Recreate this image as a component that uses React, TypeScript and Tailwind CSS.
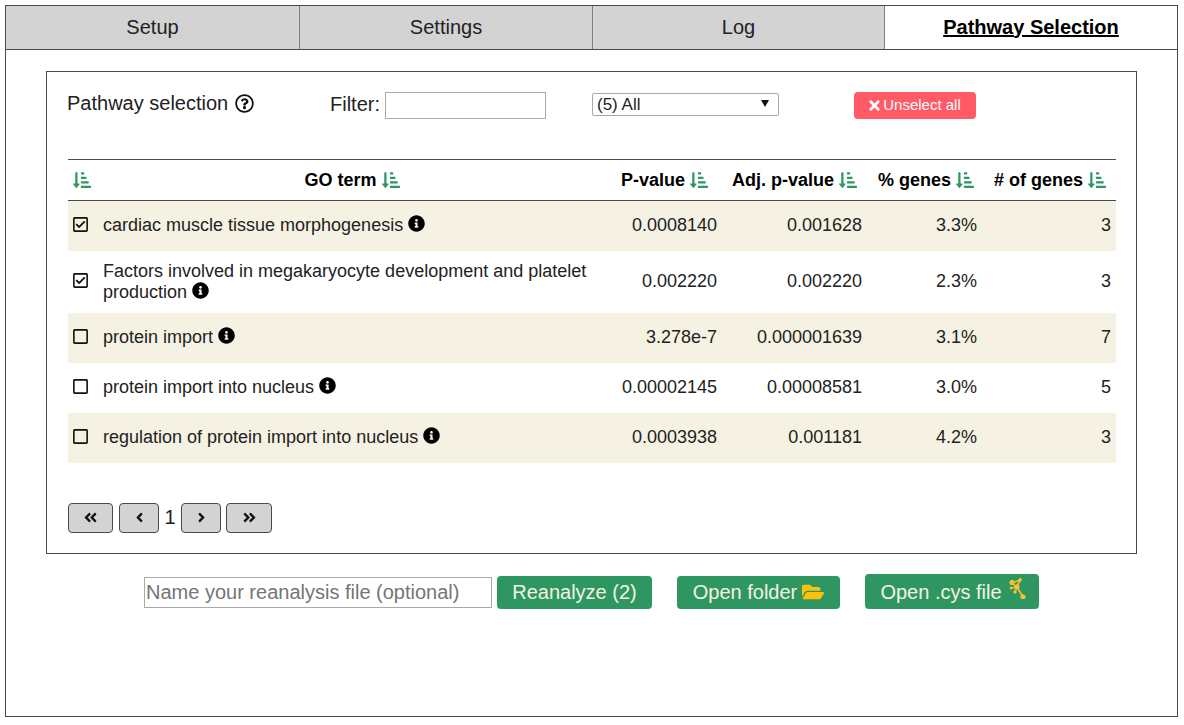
import React from 'react';
import {
  FaSortAmountDownAlt,
  FaInfoCircle,
  FaRegQuestionCircle,
  FaTimes,
  FaAngleDoubleLeft,
  FaAngleDoubleRight,
  FaAngleLeft,
  FaAngleRight,
  FaFolderOpen,
  FaRegCheckSquare,
  FaRegSquare,
} from 'react-icons/fa';

const tabs = ['Setup', 'Settings', 'Log', 'Pathway Selection'];

const rows = [
  { checked: true, term: 'cardiac muscle tissue morphogenesis', p: '0.0008140', adj: '0.001628', pct: '3.3%', n: 3, h: 'h-[50px]' },
  { checked: true, term: 'Factors involved in megakaryocyte development and platelet production', p: '0.002220', adj: '0.002220', pct: '2.3%', n: 3, h: 'h-[62px]' },
  { checked: false, term: 'protein import', p: '3.278e-7', adj: '0.000001639', pct: '3.1%', n: 7, h: 'h-[50px]' },
  { checked: false, term: 'protein import into nucleus', p: '0.00002145', adj: '0.00008581', pct: '3.0%', n: 5, h: 'h-[50px]' },
  { checked: false, term: 'regulation of protein import into nucleus', p: '0.0003938', adj: '0.001181', pct: '4.2%', n: 3, h: 'h-[50px]' },
];

const SortIcon: React.FC = () => (
  <FaSortAmountDownAlt className="inline-block text-[18px] text-[#2e9761] align-[-3px]" />
);

const CytoscapeIcon: React.FC = () => (
  <svg viewBox="0 0 20 22" className="w-[20px] h-[22px] -mt-[7px] ml-[6px]" fill="#fbc02d" stroke="#fbc02d">
    <path d="M12 3 L4 6 L9 10 Z M9 10 L15 20 M9 10 L7 15 M3 11 L9 10" strokeWidth="1.6" fill="none" />
    <circle cx="12" cy="3" r="1.4" />
    <circle cx="4" cy="5.5" r="2.2" />
    <circle cx="9" cy="10" r="2.2" />
    <circle cx="3" cy="11" r="1" />
    <circle cx="7" cy="15" r="1.2" />
    <circle cx="15" cy="20" r="2.2" />
  </svg>
);

const PageButton: React.FC<{ w: string; children: React.ReactNode }> = ({ w, children }) => (
  <button className={`${w} h-[30px] flex items-center justify-center bg-[#d3d3d3] border border-[#4a4a4a] rounded-[4px] text-[15px] text-[#111]`}>
    {children}
  </button>
);

const tabWidths = ['w-[294px]', 'w-[293px]', 'w-[292px]', 'flex-1'];

const App: React.FC = () => {
  return (
    <div className="ml-[5px] mt-[5px] w-[1173px] h-[712px] border border-[#4a4a4a] bg-white text-[#222] font-['Liberation_Sans',Arial,sans-serif]">
      <div className="flex h-[44px] border-b border-[#4a4a4a]">
        {tabs.map((tab, i) => {
          const active = i === 3;
          return (
            <div
              key={tab}
              className={`flex items-center justify-center pb-[2px] text-[20px] ${tabWidths[i]} ${active ? 'bg-white font-bold underline text-black' : 'border-r border-[#808080] bg-[#d3d3d3]'}`}
            >
              {tab}
            </div>
          );
        })}
      </div>

      <div className="ml-[40px] mt-[21px] w-[1091px] h-[483px] border border-[#4a4a4a] px-[21px]">
        <div className="flex items-start h-[87px]">
          <div className="w-[262px] pt-[17px] -ml-[1px] mr-[1px] text-[20px] leading-[28px] flex items-center gap-[7px]">
            Pathway selection
            <FaRegQuestionCircle className="text-[19px] text-[#111]" />
          </div>
          <div className="flex items-center w-[262px] pt-[20px] text-[20px]">
            <span className="mr-[5px] -mt-[3px]">Filter:</span>
            <input className="w-[161px] h-[27px] border border-[#a9a9a9] outline-none" />
          </div>
          <div className="w-[262px] pt-[21px]">
            <div className="relative w-[187px] h-[23px] border border-[#a9a9a9] rounded-[2px] pl-[4px] text-[17px] leading-[20px] flex items-center">
              (5) All
              <span className="absolute right-[9px] top-[6px] w-0 h-0 border-x-[4px] border-x-transparent border-t-[7px] border-t-[#111]" />
            </div>
          </div>
          <div className="pt-[20px]">
            <button className="w-[122px] h-[27px] pr-[2px] rounded-[4px] bg-[#ff5a65] text-white text-[15px] flex items-center justify-center gap-[1px]">
              <FaTimes className="text-[15px]" />
              Unselect all
            </button>
          </div>
        </div>

        <table className="w-[1048px] table-fixed border-collapse text-[18px]">
          <colgroup>
            <col className="w-[29px]" />
            <col className="w-[510px]" />
            <col className="w-[110px]" />
            <col className="w-[145px]" />
            <col className="w-[115px]" />
            <col className="w-[139px]" />
          </colgroup>
          <thead>
            <tr className="h-[41px] border-y border-[#4a4a4a] text-black font-bold">
              <th className="text-left pl-[5px]"><SortIcon /></th>
              <th className="text-center">GO term <SortIcon /></th>
              <th className="text-right whitespace-nowrap pr-[9px]">P-value <SortIcon /></th>
              <th className="text-right whitespace-nowrap pr-[5px]">Adj. p-value <SortIcon /></th>
              <th className="text-right whitespace-nowrap pr-[3px]">% genes <SortIcon /></th>
              <th className="text-right whitespace-nowrap pr-[10px]"># of genes <SortIcon /></th>
            </tr>
          </thead>
          <tbody>
            {rows.map((row, i) => (
              <tr key={row.term} className={`${row.h} ${i % 2 === 0 ? 'bg-[#f5f2e3]' : 'bg-white'}`}>
                <td className="pl-[4px]">
                  {row.checked ? <FaRegCheckSquare className="text-[17px] text-[#111] -mt-[2px]" /> : <FaRegSquare className="text-[17px] text-[#111] -mt-[2px]" />}
                </td>
                <td className="pl-[6px] pr-[12px] leading-[21px]">
                  {row.term} <FaInfoCircle className="inline-block text-[17px] text-black align-[-1px]" />
                </td>
                <td className="text-right">{row.p}</td>
                <td className="text-right">{row.adj}</td>
                <td className="text-right">{row.pct}</td>
                <td className="text-right pr-[5px]">{row.n}</td>
              </tr>
            ))}
          </tbody>
        </table>

        <div className="flex items-center mt-[40px] text-[20px]">
          <PageButton w="w-[45px]"><FaAngleDoubleLeft /></PageButton>
          <span className="w-[6px]" />
          <PageButton w="w-[40px]"><FaAngleLeft /></PageButton>
          <span className="w-[22px] text-center -mt-[2px]">1</span>
          <PageButton w="w-[40px]"><FaAngleRight /></PageButton>
          <span className="w-[5px]" />
          <PageButton w="w-[46px]"><FaAngleDoubleRight /></PageButton>
        </div>
      </div>

      <div className="flex items-end ml-[138px] mt-[20px] text-[20px] h-[35px]">
        <input
          placeholder="Name your reanalysis file (optional)"
          className="w-[348px] h-[31px] mb-[1px] border border-[#a9a9a9] px-[1px] text-[20px] outline-none placeholder:text-[#757575]"
        />
        <button className="ml-[5px] w-[155px] h-[33px] pb-[2px] rounded-[4px] bg-[#2e9761] text-[#f5f2e3]">Reanalyze (2)</button>
        <button className="ml-[25px] w-[163px] h-[33px] pb-[2px] rounded-[4px] bg-[#2e9761] text-[#f5f2e3] flex items-center justify-center gap-[5px]">
          Open folder
          <FaFolderOpen className="text-[#ffc107] text-[22px]" />
        </button>
        <button className="ml-[25px] w-[174px] h-[35px] pl-[4px] rounded-[4px] bg-[#2e9761] text-[#f5f2e3] flex items-center justify-center">
          Open .cys file
          <CytoscapeIcon />
        </button>
      </div>
    </div>
  );
};

export default App;
